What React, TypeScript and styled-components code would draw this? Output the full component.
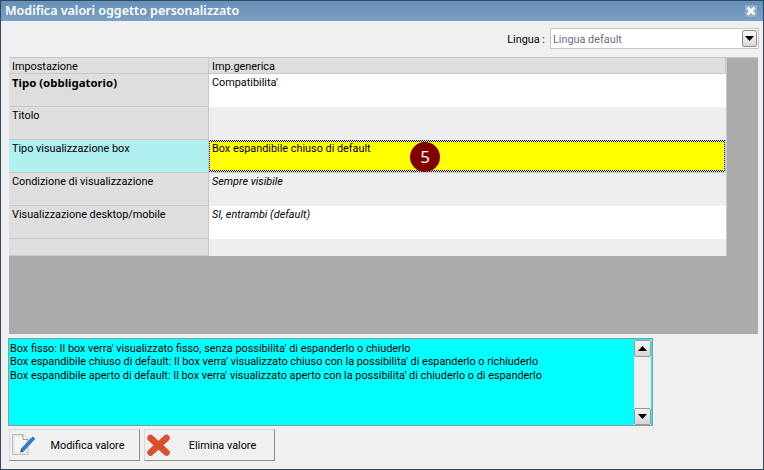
import React from "react";
import styled, { createGlobalStyle } from "styled-components";

const Global = createGlobalStyle`
  html, body { margin: 0; padding: 0; width: 764px; height: 470px; overflow: hidden; background: #f0f0f0; }
  * { box-sizing: border-box; }
`;

const Window = styled.div`
  width: 764px; height: 470px; display: flex; flex-direction: column;
  background: #f0f0f0; font: 10.85px/13px Roboto, sans-serif; color: #000;
  border: 1px solid #2c4a63;
`;
const TitleBar = styled.div`
  height: 20px; flex: none; display: flex; align-items: center; justify-content: space-between;
  padding: 0 3px 1px 4px; color: #fff; font: 600 12.5px/16px "Noto Sans", sans-serif;
  background: linear-gradient(#6890b8, #7c9fc4);
`;
const Close = styled.div`
  width: 12px; height: 12px; display: flex; align-items: center; justify-content: center;
  background: #8fadcb; margin-right: 3px;
`;
const Body = styled.div`
  flex: 1; min-height: 0; display: flex; flex-direction: column; padding: 7px 4px 0 7px;
`;
const LangRow = styled.div`
  height: 21px; display: flex; justify-content: flex-end; align-items: center; gap: 5px; flex: none;
`;
const LangLabel = styled.span` padding-top: 1px; color: #000; `;
const Select = styled.div`
  width: 209px; height: 21px; border: 1px solid #cbc9b4; background: #fff; color: #6d6d80;
  display: flex; align-items: center; justify-content: space-between; padding: 0 1px 0 2px;
`;
const SelectText = styled.span` padding-top: 1px; `;
const SelectButton = styled.div`
  width: 15px; height: 17px; border: 1px solid #8d8d8d; border-radius: 2px;
  background: linear-gradient(#f7f7f7, #d8d8d8); display: flex; align-items: center; justify-content: center;
`;
const GridArea = styled.div`
  height: 277px; margin-top: 8px; flex: none; background: #ababab; border-top: 1px solid #c8c8c8;
  margin-left: 1px; width: 749px;
`;
const Table = styled.div`
  width: 718px; display: grid; grid-template-columns: 200px 1fr;
  grid-template-rows: 16px 33px 33px 33px 33px 33px 17px; background: #c8c8c8;
  border-right: 1px solid #c8c8c8;
`;
const Head = styled.div`
  background: #dedede; padding: 2px 3px 0; border-right: 1px solid #c8c8c8; border-bottom: 1px solid #c8c8c8; white-space: nowrap;
`;
const Label = styled.div<{ $active?: boolean; $bold?: boolean }>`
  background: ${(p) => (p.$active ? "#b0f0f0" : "#dedede")};
  ${(p) => (p.$bold ? `font: 700 11.4px/13px "Noto Sans", sans-serif;` : "")}
  padding: 2px 3px 0; border-right: 1px solid #c8c8c8; border-bottom: 1px solid #c8c8c8; white-space: nowrap;
`;
const Value = styled.div<{ $bg?: string; $italic?: boolean }>`
  background: ${(p) => p.$bg || "#eeeeee"}; font-style: ${(p) => (p.$italic ? "italic" : "normal")};
  padding: 2px 3px 0; white-space: nowrap;
`;
const Selected = styled.div`
  position: relative; padding: 0 2px; white-space: nowrap; margin: 0 1px 1px 0;
  border: solid transparent; border-width: 2px 1px;
  background:
    linear-gradient(#ffff00, #ffff00) padding-box,
    repeating-conic-gradient(#000 0 25%, #fff 0 50%) 0 0 / 2px 2px border-box;
`;
const Badge = styled.div`
  position: absolute; left: 200px; top: 0; width: 30px; height: 30px; border-radius: 50%;
  background: #800000; color: #fff; font: 17px/29px "Noto Sans", sans-serif; text-align: center;
`;
const InfoBox = styled.div`
  margin-top: 4px; width: 645px; height: 88px; flex: none; background: #00ffff;
  border: 1px solid #8c9a9a; display: flex; justify-content: space-between;
`;
const InfoText = styled.div` padding: 3px 1px 0; line-height: 13.3px; white-space: nowrap; `;
const Scroll = styled.div`
  width: 17px; background: #f0f0f0; margin: 1px 1px 0 0; display: flex; flex-direction: column; justify-content: space-between;
`;
const ScrollBtn = styled.div`
  width: 17px; height: 17px; border: 1px solid #9a9a9a; border-radius: 2px;
  background: linear-gradient(#f4f4f4, #d6d6d6); display: flex; align-items: center; justify-content: center;
`;
const Buttons = styled.div` display: flex; gap: 4px; margin-top: 3px; margin-left: 1px; `;
const Button = styled.div`
  width: 131px; height: 32px; display: flex; align-items: center; background: #f0f0f0;
  border: 1px solid; border-color: #d8d8d8 #8f8f8f #8f8f8f #d8d8d8; padding-left: 2px;
`;
const ButtonText = styled.span` flex: 1; text-align: center; padding-top: 1px; white-space: nowrap; `;

const Up = () => <svg width="9" height="5"><path d="M4.5 0 L9 5 H0 Z" fill="#000" /></svg>;
const Down = () => <svg width="9" height="5"><path d="M0 0 H9 L4.5 5 Z" fill="#000" /></svg>;

const EditIcon = () => (
  <svg width="24" height="24" viewBox="0 0 24 24">
    <path d="M0.5 1.5 H11 L16 6.5 V21.5 H0.5 Z" fill="#e8e8e8" stroke="#bdbdbd" />
    <path d="M3 4 H10 L13.5 7.5 V19 H3 Z" fill="#f6f6f6" />
    <path d="M11 1.5 V6.5 H16" fill="#fafafa" stroke="#9c9c9c" />
    <path d="M10.5 17 L20.5 6" stroke="#2f7fc6" strokeWidth="4" />
    <path d="M8.2 19.4 L9 15.6 L12 18.4 Z" fill="#25527c" />
    <path d="M19.5 5 L21 3.5 L23 6 L21.5 7.5 Z" fill="#2a6aa8" />
  </svg>
);
const DeleteIcon = () => (
  <svg width="24" height="24" viewBox="0 0 24 24">
    <path d="M3.5 5 L19.5 19.5 M19.5 5 L3.5 19.5" stroke="#d9502f" strokeWidth="6.5" strokeLinecap="round" />
  </svg>
);

export default function App() {
  return (
    <Window>
      <Global />
      <TitleBar>
        <span>Modifica valori oggetto personalizzato</span>
        <Close>
          <svg width="10" height="10"><path d="M1.5 1.5 L8.5 8.5 M8.5 1.5 L1.5 8.5" stroke="#fff" strokeWidth="2.6" /></svg>
        </Close>
      </TitleBar>
      <Body>
        <LangRow>
          <LangLabel>Lingua :</LangLabel>
          <Select>
            <SelectText>Lingua default</SelectText>
            <SelectButton><Down /></SelectButton>
          </Select>
        </LangRow>
        <GridArea>
          <Table>
            <Head>Impostazione</Head>
            <Head>Imp.generica</Head>
            <Label $bold>Tipo (obbligatorio)</Label>
            <Value $bg="#fff">Compatibilita'</Value>
            <Label>Titolo</Label>
            <Value />
            <Label $active>Tipo visualizzazione box</Label>
            <Selected>
              Box espandibile chiuso di default
              <Badge>5</Badge>
            </Selected>
            <Label>Condizione di visualizzazione</Label>
            <Value $italic>Sempre visibile</Value>
            <Label>Visualizzazione desktop/mobile</Label>
            <Value $bg="#fff" $italic>SI, entrambi (default)</Value>
            <Label />
            <Value />
          </Table>
        </GridArea>
        <InfoBox>
          <InfoText>
            Box fisso: Il box verra' visualizzato fisso, senza possibilita' di espanderlo o chiuderlo<br />
            Box espandibile chiuso di default: Il box verra' visualizzato chiuso con la possibilita' di espanderlo o richiuderlo<br />
            Box espandibile aperto di default: Il box verra' visualizzato aperto con la possibilita' di chiuderlo o di espanderlo
          </InfoText>
          <Scroll>
            <ScrollBtn><Up /></ScrollBtn>
            <ScrollBtn><Down /></ScrollBtn>
          </Scroll>
        </InfoBox>
        <Buttons>
          <Button><EditIcon /><ButtonText>Modifica valore</ButtonText></Button>
          <Button><DeleteIcon /><ButtonText>Elimina valore</ButtonText></Button>
        </Buttons>
      </Body>
    </Window>
  );
}
